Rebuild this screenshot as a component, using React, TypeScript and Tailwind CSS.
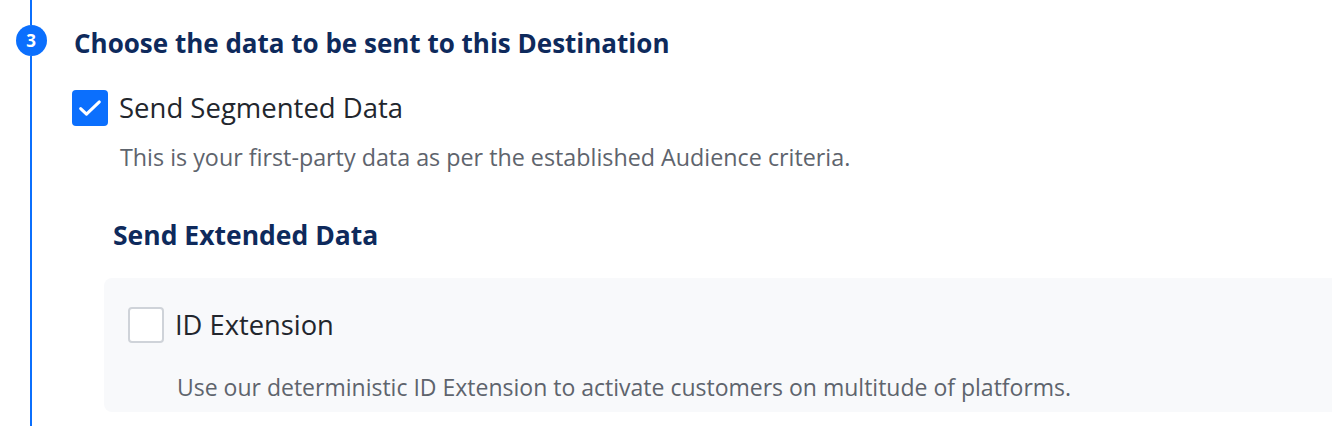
import React from "react";

function Check() {
  return (
    <svg width="28" height="28" viewBox="0 0 24 24" fill="none">
      <path d="M4 12.5l5 4.8L20 6.8" stroke="white" strokeWidth="2.6" strokeLinecap="round" strokeLinejoin="round" />
    </svg>
  );
}

export default function App() {
  return (
    <div className="w-[1332px] h-[426px] bg-white overflow-hidden flex" style={{ fontFamily: "'Open Sans', 'Noto Sans', sans-serif" }}>
      <div className="w-[62px] shrink-0 flex flex-col items-center">
        <div className="w-[2px] h-[25px] bg-[#0b6ffd]" />
        <div className="w-[31px] h-[31px] rounded-full bg-[#0b6ffd] flex items-center justify-center text-white text-[17px] font-bold leading-none">
          3
        </div>
        <div className="w-[2px] flex-1 bg-[#0b6ffd]" />
      </div>
      <div className="flex-1 pl-[12px] pt-[27px] min-w-0">
        <h2 className="text-[26px] font-bold text-[#0e2a5c] leading-[32px] whitespace-nowrap">Choose the data to be sent to this Destination</h2>
        <div className="mt-[31px] ml-[-2px] flex items-center gap-[11px]">
          <div className="w-[36px] h-[36px] rounded-[4px] bg-[#0b6ffd] flex items-center justify-center">
            <Check />
          </div>
          <span className="text-[27.5px] text-[#22262d] leading-[36px] whitespace-nowrap">Send Segmented Data</span>
        </div>
        <p className="mt-[17px] ml-[46px] text-[23.3px] text-[#5e646d] leading-[28px] whitespace-nowrap">
          This is your first-party data as per the established Audience criteria.
        </p>
        <h3 className="mt-[48px] ml-[39px] text-[26.5px] font-bold text-[#0e2a5c] leading-[32px] whitespace-nowrap">Send Extended Data</h3>
        <div className="mt-[27px] ml-[30px] mr-[-20px] rounded-[8px] bg-[#f8f9fb] pl-[24px] pt-[29px] pb-[11px]">
          <div className="flex items-center gap-[11px]">
            <div className="w-[36px] h-[36px] rounded-[4px] bg-white border-2 border-[#cfd3d9]" />
            <span className="text-[27.3px] text-[#22262d] leading-[36px] whitespace-nowrap">ID Extension</span>
          </div>
          <p className="mt-[30px] ml-[49px] text-[23px] text-[#5e646d] leading-[28px] whitespace-nowrap">
            Use our deterministic ID Extension to activate customers on multitude of platforms.
          </p>
        </div>
      </div>
    </div>
  );
}
